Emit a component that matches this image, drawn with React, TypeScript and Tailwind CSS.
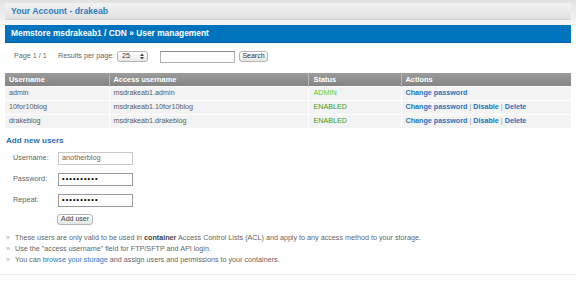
import React from "react";

const font = { fontFamily: '"Liberation Sans", Arial, sans-serif' };

function Row({ u, a, s, admin }: { u: string; a: string; s: string; admin?: boolean }) {
  return (
    <tr className="h-[14px] bg-[#f3f3f3] border-t border-white">
      <td className="pl-[4px] border-r border-white text-[#5a5a5a]">{u}</td>
      <td className="pl-[4px] border-r border-white text-[#5a5a5a]">{a}</td>
      <td className={"pl-[5px] border-r border-white " + (admin ? "text-[#4fd12e]" : "text-[#3c9a23]")}>{s}</td>
      <td className="pl-[4px] font-bold text-[#1f72b8]">
        {admin ? (
          <span>Change password</span>
        ) : (
          <span>
            Change password <span className="font-normal text-[#999]">|</span> Disable{" "}
            <span className="font-normal text-[#999]">|</span> Delete
          </span>
        )}
      </td>
    </tr>
  );
}

export default function App() {
  return (
    <div className="w-[576px] h-[281px] bg-white overflow-hidden" style={font}>
      <div className="bg-gradient-to-b from-[#e2e2e2] to-[#f6f6f6] pt-[3px] pb-[5px] pl-[5px] pr-[5px]">
        <div className="h-[17px] bg-gradient-to-b from-[#f3f3f3] to-[#e1e1e1] border-b border-[#cfcfcf] pl-[6px] text-[8.7px] font-bold leading-[17px] text-[#2d7bbb]">
          Your Account - drakeab
        </div>
      </div>
      <div className="mx-[5px] h-[18px] bg-[#0073bf] border-b border-[#0a60a3] pl-[6px] text-[8.4px] font-bold leading-[17px] text-white">
        Memstore msdrakeab1 / CDN » User management
      </div>
      <div className="flex items-center h-[25px] mt-[1px] text-[7.2px] text-[#666]">
        <span className="ml-[14px] w-[44px]">Page 1 / 1</span>
        <span className="w-[59px]">Results per page:</span>
        <div className="w-[31px] h-[11px] rounded-[3px] border border-[#b5b5b5] bg-gradient-to-b from-white to-[#e8e8e8] flex items-center justify-between pl-[4px] pr-[3px] text-[#333]">
          <span>25</span>
          <svg width="4" height="7" viewBox="0 0 4 7">
            <path d="M0 3 L2 0.5 L4 3 Z M0 4 L2 6.5 L4 4 Z" fill="#444" />
          </svg>
        </div>
        <div className="ml-[12px] w-[75px] h-[12px] border border-[#b0b0b0] border-t-[#8c8c8c] bg-white" />
        <div className="ml-[4px] w-[29px] h-[11px] rounded-[3px] border border-[#b5b5b5] bg-gradient-to-b from-white to-[#e6e6e6] flex items-center justify-center text-[#333] text-[7px]">
          Search
        </div>
      </div>
      <table className="mx-[5px] w-[566px] border-collapse text-[7.2px] mt-[4px] table-fixed">
        <colgroup>
          <col className="w-[104px]" />
          <col className="w-[199px]" />
          <col className="w-[93px]" />
          <col className="w-[170px]" />
        </colgroup>
        <thead>
          <tr className="h-[13px] bg-gradient-to-b from-[#9b9b9b] to-[#858585] text-white text-left text-[7.4px]">
            <th className="pl-[4px] border-r border-[#b8b8b8] font-bold">Username</th>
            <th className="pl-[4px] border-r border-[#b8b8b8] font-bold">Access username</th>
            <th className="pl-[5px] border-r border-[#b8b8b8] font-bold">Status</th>
            <th className="pl-[4px] font-bold">Actions</th>
          </tr>
        </thead>
        <tbody>
          <Row u="admin" a="msdrakeab1.admin" s="ADMIN" admin />
          <Row u="10for10blog" a="msdrakeab1.10for10blog" s="ENABLED" />
          <Row u="drakeblog" a="msdrakeab1.drakeblog" s="ENABLED" />
        </tbody>
      </table>
      <div className="ml-[6px] mt-[7px] text-[8.1px] font-bold text-[#2d6fb0] leading-[11px]">Add new users</div>
      <div className="mt-[6px] flex flex-col gap-[8px] text-[7.3px] text-[#666]">
        {[
          ["Username:", "anotherblog", false],
          ["Password:", "••••••••••", true],
          ["Repeat:", "••••••••••", true],
        ].map(([l, v, p]) => (
          <div key={l as string} className="flex items-center h-[13px]">
            <span className="ml-[13px] w-[45px]">{l}</span>
            <div
              className={
                "w-[75px] h-[13px] border bg-white flex items-center pl-[3px] " +
                (p ? "border-[#9a9a9a] text-black font-bold tracking-[1.1px]" : "border-[#c8c8c8] text-[#666]")
              }
            >
              {v}
            </div>
          </div>
        ))}
      </div>
      <div className="ml-[57px] mt-[7px] w-[36px] h-[11px] rounded-[3px] border border-[#b5b5b5] bg-gradient-to-b from-white to-[#e6e6e6] flex items-center justify-center text-[7px] text-[#444]">
        Add user
      </div>
      <ul className="mt-[7px] text-[7.2px] text-[#666] leading-[11px] border-b border-[#ececec] pb-[9px]">
        <li className="flex">
          <span className="ml-[6px] w-[9px] text-[#aaa]">»</span>
          <span>
            These users are only valid to be used in <b className="text-[#444]">container</b> Access Control Lists (ACL)
            and apply to any access method to your storage.
          </span>
        </li>
        <li className="flex">
          <span className="ml-[6px] w-[9px] text-[#aaa]">»</span>
          <span>Use the "access username" field for FTP/SFTP and API login.</span>
        </li>
        <li className="flex">
          <span className="ml-[6px] w-[9px] text-[#aaa]">»</span>
          <span>
            You can <span className="text-[#1f7bc4]">browse your storage</span> and assign users and permissions to your
            containers.
          </span>
        </li>
      </ul>
    </div>
  );
}
